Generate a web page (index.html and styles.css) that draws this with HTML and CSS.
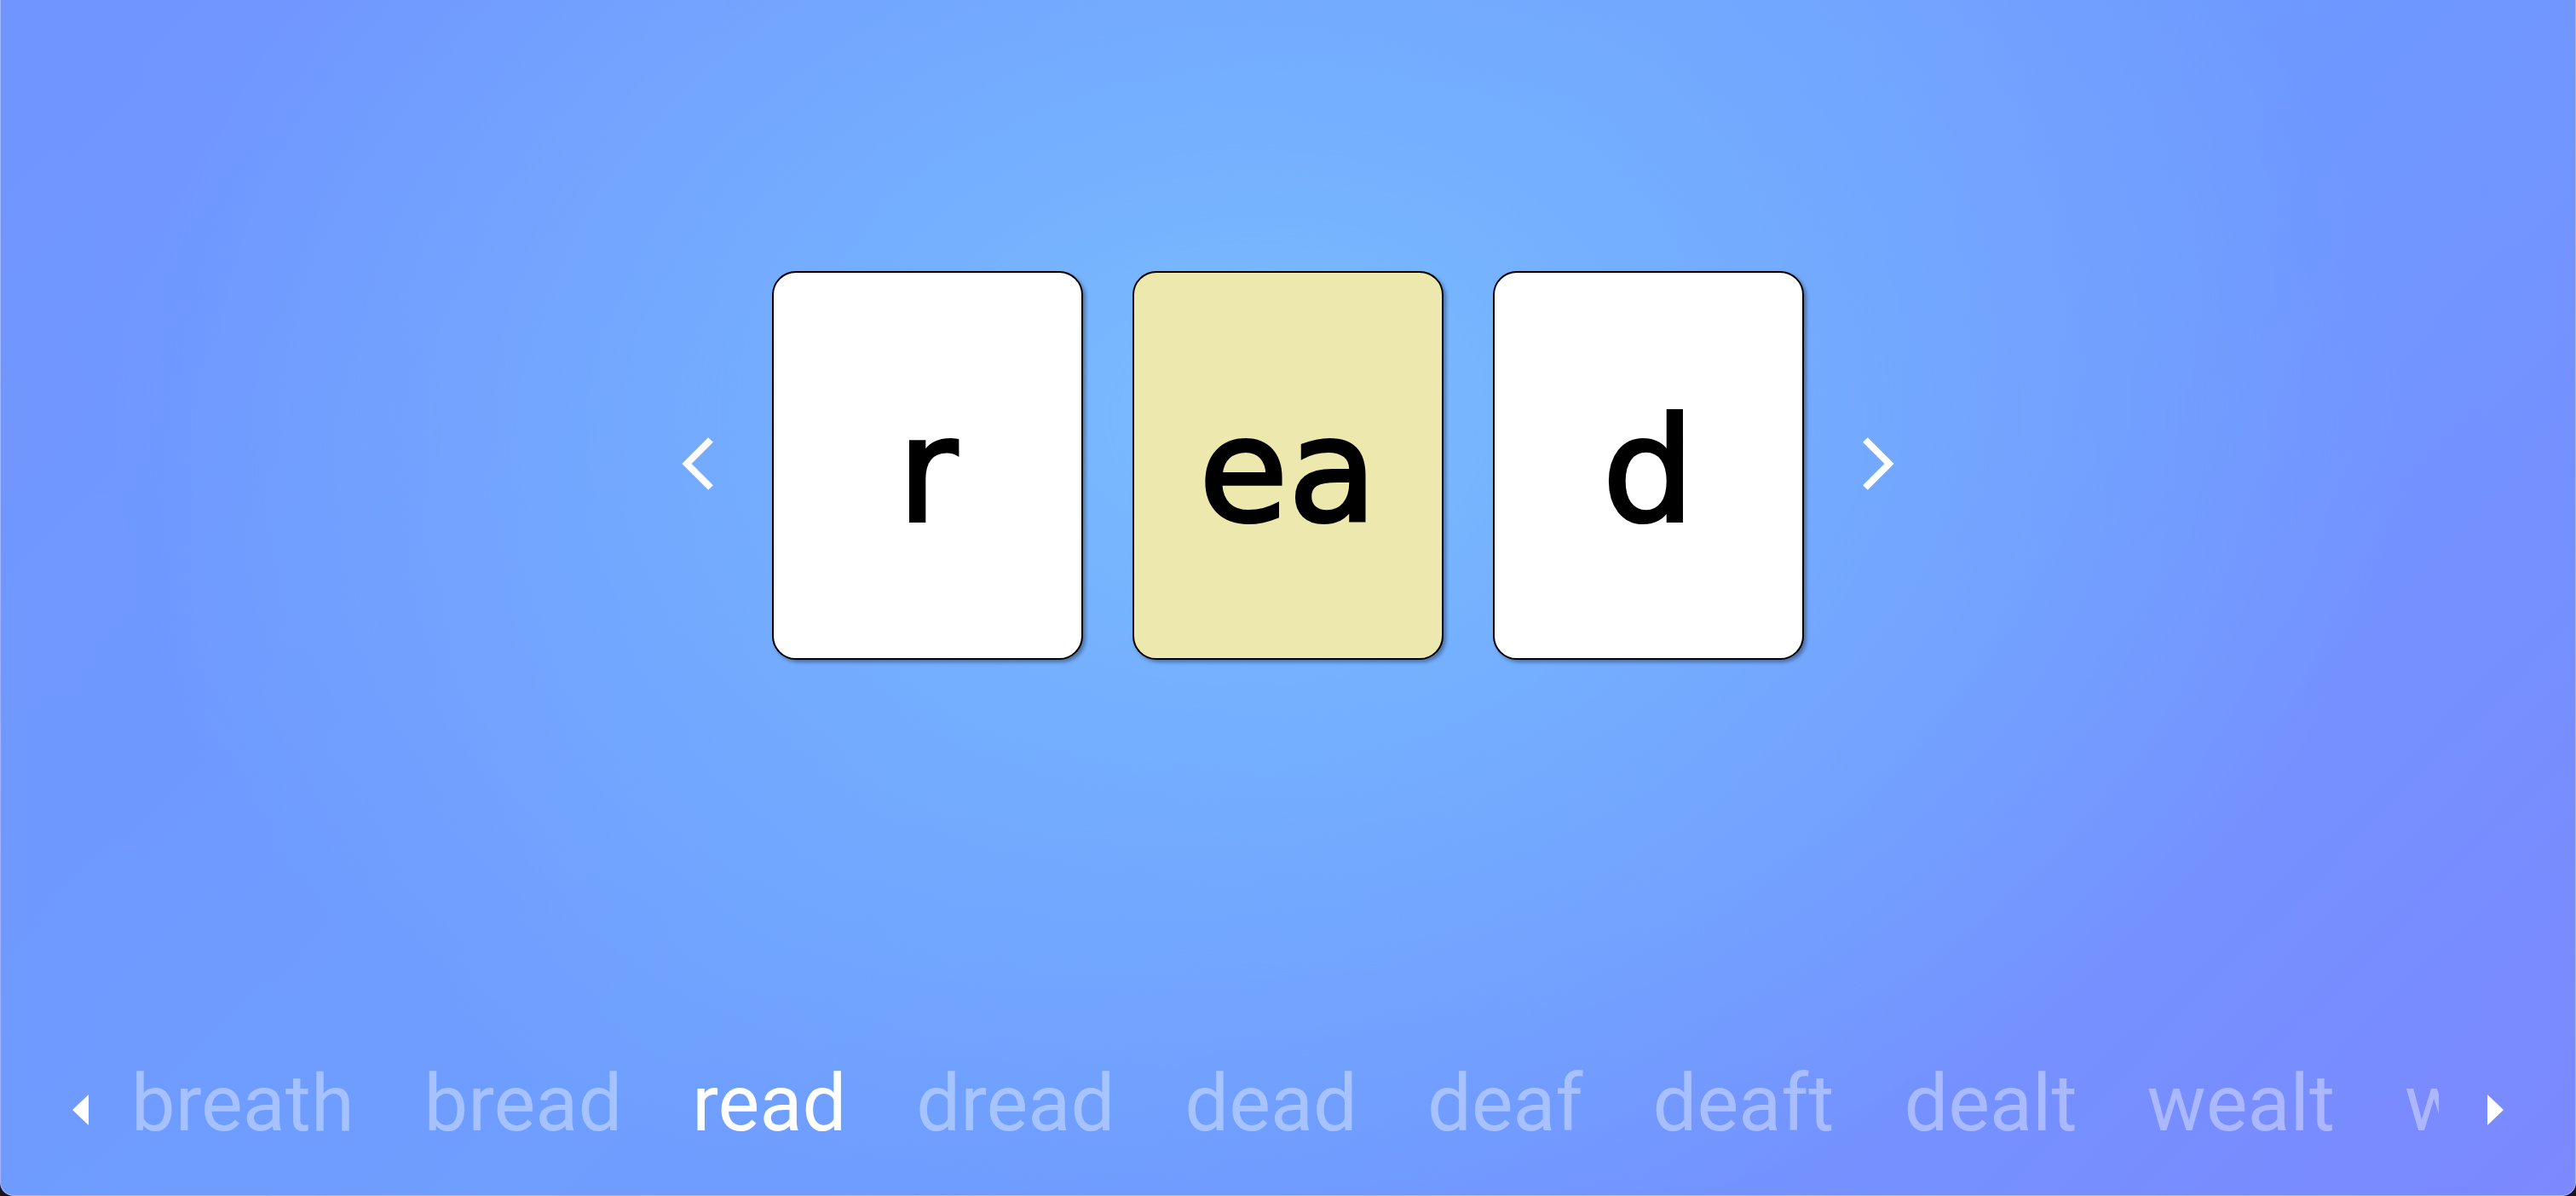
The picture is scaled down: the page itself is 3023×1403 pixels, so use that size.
FILE: index.html
```html
<!DOCTYPE html>
<html lang="en">
<head>
<meta charset="utf-8">
<title>Phonics word builder</title>
<link rel="stylesheet" href="styles.css">
</head>
<body>
<div class="app">
  <main class="stage">
    <div class="builder">
      <button class="nav-btn" aria-label="Previous">
        <svg width="40" height="70" viewBox="0 0 40 70"><polyline points="34,7 6,35 34,63" fill="none" stroke="#fff" stroke-width="8" stroke-linejoin="miter"/></svg>
      </button>
      <div class="card"><span class="letter">r</span></div>
      <div class="card card-focus"><span class="letter">ea</span></div>
      <div class="card"><span class="letter">d</span></div>
      <button class="nav-btn" aria-label="Next">
        <svg width="40" height="70" viewBox="0 0 40 70"><polyline points="6,7 34,35 6,63" fill="none" stroke="#fff" stroke-width="8" stroke-linejoin="miter"/></svg>
      </button>
    </div>
  </main>
  <footer class="word-bar">
    <button class="tri-btn" aria-label="Scroll left">
      <svg width="20" height="36" viewBox="0 0 20 36"><polygon points="20,0 1,18 20,36" fill="#fff"/></svg>
    </button>
    <div class="word-scroll">
      <ul class="word-list">
        <li class="word">breath</li>
        <li class="word">bread</li>
        <li class="word word-active">read</li>
        <li class="word">dread</li>
        <li class="word">dead</li>
        <li class="word">deaf</li>
        <li class="word">deaft</li>
        <li class="word">dealt</li>
        <li class="word">wealt</li>
        <li class="word">wealth</li>
      </ul>
    </div>
    <button class="tri-btn" aria-label="Scroll right">
      <svg width="20" height="36" viewBox="0 0 20 36"><polygon points="0,0 19,18 0,36" fill="#fff"/></svg>
    </button>
  </footer>
</div>
</body>
</html>
```
FILE: styles.css
```css
html, body {
  margin: 0;
  padding: 0;
  height: 100%;
}

body {
  background: #1b1420;
  font-family: Roboto, "Liberation Sans", sans-serif;
}

.app {
  box-sizing: border-box;
  width: 3023px;
  height: 1403px;
  display: flex;
  flex-direction: column;
  border: 1px solid rgba(200, 210, 255, 0.55);
  border-top: none;
  border-radius: 0 0 16px 16px;
  background:
    radial-gradient(ellipse 1350px 1000px at 1470px 490px, rgba(122, 188, 254, 1) 0%, rgba(118, 180, 254, 0.8) 35%, rgba(112, 162, 255, 0) 100%),
    linear-gradient(135deg, #7194ff 0%, #6e9eff 45%, #6f98ff 65%, #7c88ff 100%);
  overflow: hidden;
}

.stage {
  padding-top: 318px;
  display: flex;
  justify-content: center;
}

.builder {
  display: flex;
  align-items: center;
  gap: 66px;
  margin-top: -4px;
}

.builder .card {
  margin-top: 4px;
}

.builder .card + .card {
  margin-left: -8px;
}

.nav-btn, .tri-btn {
  border: none;
  background: none;
  padding: 0;
  margin: 0;
  display: flex;
  cursor: pointer;
}

.card {
  box-sizing: border-box;
  width: 365px;
  height: 456px;
  background: #ffffff;
  border: 2px solid #000;
  border-radius: 28px;
  box-shadow: 3px 3px 4px rgba(0, 0, 0, 0.35);
  display: flex;
  align-items: center;
  justify-content: center;
  padding-top: 12px;
}

.card-focus {
  background: #ede8ad;
}

.letter {
  font-family: "DejaVu Sans", "Noto Sans", sans-serif;
  font-weight: 400;
  font-size: 170px;
  line-height: 1;
  color: #000;
  -webkit-text-stroke: 4px #000;
}

.word-bar {
  margin-top: auto;
  display: flex;
  align-items: flex-start;
  padding: 0 83px 53px 83px;
}

.tri-btn {
  margin-top: 43px;
}

.word-scroll {
  flex: 1;
  overflow: hidden;
  margin: 0 57px 0 11px;
}

.word-list {
  list-style: none;
  margin: 0;
  padding: 0 0 0 39px;
  display: flex;
  gap: 82px;
  white-space: nowrap;
}

.word {
  font-family: Roboto, "Liberation Sans", sans-serif;
  font-size: 92px;
  line-height: 108px;
  color: rgba(255, 255, 255, 0.38);
}

.word-active {
  color: #ffffff;
}
```
